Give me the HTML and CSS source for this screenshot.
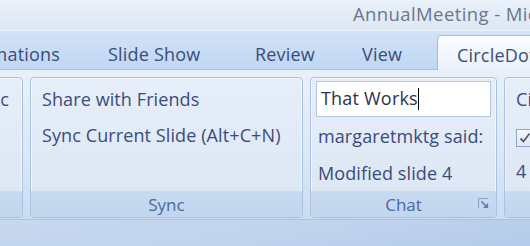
FILE: index.html
```html
<!DOCTYPE html>
<html lang="en">
<head>
    <meta charset="UTF-8">
    <title>AnnualMeeting - Microsoft PowerPoint</title>
    <link rel="stylesheet" href="styles.css">
</head>
<body>
    <div class="window">
        <div class="titlebar">
            <span class="title">AnnualMeeting - Microsoft PowerPoint</span>
        </div>

        <div class="tabs">
            <div class="tab tab-first">Animations</div>
            <div class="tab tab-slideshow">Slide Show</div>
            <div class="tab tab-review">Review</div>
            <div class="tab tab-view">View</div>
            <div class="tab tab-active">CircleDot</div>
        </div>

        <div class="ribbon">
            <div class="group group-prev">
                <div class="group-body">
                    <div class="cmd cmd-right">Doc</div>
                </div>
                <div class="group-label"></div>
            </div>

            <div class="group group-sync">
                <div class="group-body">
                    <div class="cmd">Share with Friends</div>
                    <div class="cmd">Sync Current Slide (Alt+C+N)</div>
                </div>
                <div class="group-label">Sync</div>
            </div>

            <div class="group group-chat">
                <div class="group-body">
                    <div class="chat-input">That Works<span class="caret"></span></div>
                    <div class="cmd chat-line">margaretmktg said:</div>
                    <div class="cmd chat-line">Modified slide 4</div>
                </div>
                <div class="group-label">
                    Chat
                    <svg class="launcher" viewBox="0 0 10 10">
                        <path d="M0.5 9V0.5H9" fill="none" stroke="#8fa6c4" stroke-width="1"/>
                        <path d="M3 3L8.5 8.5M5 8.5H8.5V5" fill="none" stroke="#5b7fb3" stroke-width="1.4"/>
                    </svg>
                </div>
            </div>

            <div class="group group-next">
                <div class="group-body">
                    <div class="cmd">Circles</div>
                    <div class="check-row">
                        <span class="checkbox">
                            <svg viewBox="0 0 14 14">
                                <path d="M2.5 7.5L5.5 10.5L11.5 2.5" fill="none" stroke="#4a5e80" stroke-width="1.8"/>
                            </svg>
                        </span>
                    </div>
                    <div class="cmd">4 - 5</div>
                </div>
                <div class="group-label"></div>
            </div>
        </div>

        <div class="statusband"></div>
    </div>
</body>
</html>
```

FILE: styles.css
```css
* {
    margin: 0;
    padding: 0;
    box-sizing: border-box;
}

body {
    font-family: 'Open Sans', 'Noto Sans', sans-serif;
    background: #c9daf0;
    overflow: hidden;
}

.window {
    width: 530px;
    height: 246px;
    overflow: hidden;
    display: flex;
    flex-direction: column;
}

/* Title bar */
.titlebar {
    height: 30px;
    flex-shrink: 0;
    background: linear-gradient(180deg, #e9f0f9 0%, #dde7f4 100%);
    padding-left: 353px;
    white-space: nowrap;
    overflow: hidden;
}

.title {
    display: block;
    font-size: 18.5px;
    line-height: 28px;
    letter-spacing: 0.4px;
    color: #6b7789;
}

/* Tabs */
.tabs {
    height: 40px;
    flex-shrink: 0;
    display: flex;
    align-items: flex-end;
    background: linear-gradient(180deg, #d3e3f7 0%, #bfd6f4 100%);
    border-top: 1px solid #eef4fb;
    border-bottom: 1px solid #a3bfe3;
    white-space: nowrap;
}

.tab {
    font-size: 18px;
    letter-spacing: 0.2px;
    color: #3a4c7c;
    height: 34px;
    line-height: 34px;
    padding-top: 2px;
    flex-shrink: 0;
}

.tab-first {
    margin-left: -37px;
    width: 145px;
}

.tab-slideshow {
    width: 147px;
}

.tab-review {
    width: 107px;
}

.tab-view {
    width: 75px;
}

.tab-active {
    padding-left: 19px;
    width: 120px;
    background: linear-gradient(180deg, #fbfdff 0%, #eaf1fb 100%);
    border: 1px solid #9ebde6;
    border-bottom: none;
    border-radius: 5px 5px 0 0;
    margin-bottom: -1px;
    height: 35px;
}

/* Ribbon body */
.ribbon {
    height: 150px;
    flex-shrink: 0;
    display: flex;
    gap: 7px;
    padding-top: 7px;
    background: linear-gradient(180deg, #e8f0fa 0%, #dbe7f6 60%, #cbdcf1 100%);
    border-bottom: 1px solid #a9c3e4;
}

.group {
    flex-shrink: 0;
    height: 141px;
    display: flex;
    flex-direction: column;
    border: 1px solid #aac2e2;
    border-radius: 4px;
    overflow: hidden;
    background: linear-gradient(180deg, #e6eef9 0%, #dbe6f4 100%);
    box-shadow: inset 0 0 0 1px rgba(255, 255, 255, 0.6);
}

.group-body {
    flex: 1;
    display: flex;
    flex-direction: column;
}

.group-label {
    height: 26px;
    flex-shrink: 0;
    position: relative;
    text-align: center;
    font-size: 17px;
    line-height: 28px;
    color: #4a6aa0;
    background: linear-gradient(180deg, #c9dbf1 0%, #c1d5ee 100%);
}

.cmd {
    font-size: 18px;
    letter-spacing: 0.1px;
    color: #3a4c7c;
    white-space: nowrap;
    height: 36px;
    line-height: 36px;
}

.group-prev {
    width: 83px;
    margin-left: -60px;
}

.group-prev .group-body {
    padding-top: 3px;
}

.cmd-right {
    text-align: right;
    padding-right: 13px;
}

.group-sync {
    width: 273px;
}

.group-sync .group-body {
    padding: 3px 0 0 11px;
}

.group-chat {
    width: 187px;
}

.group-chat .group-body {
    padding: 3px 5px 0;
}

.chat-input {
    height: 36px;
    background: #ffffff;
    border: 1px solid #b3c7e2;
    font-size: 18px;
    letter-spacing: 0.2px;
    line-height: 33px;
    padding-left: 4px;
    color: #2a3350;
    white-space: nowrap;
}

.caret {
    display: inline-block;
    width: 1px;
    height: 22px;
    background: #000000;
    vertical-align: -5px;
}

.chat-line {
    padding-left: 2px;
    height: 37px;
    line-height: 38px;
}

.launcher {
    position: absolute;
    right: 7px;
    top: 7px;
    width: 11px;
    height: 11px;
}

.group-next {
    width: 60px;
}

.group-next .group-body {
    padding: 3px 0 0 11px;
}

.check-row {
    height: 36px;
    display: flex;
    align-items: center;
    padding-top: 6px;
}

.checkbox {
    width: 18px;
    height: 18px;
    border: 1px solid #8ea7c8;
    background: linear-gradient(180deg, #f3f6fa 0%, #e2e8f0 100%);
    display: flex;
    align-items: center;
    justify-content: center;
}

.checkbox svg {
    width: 14px;
    height: 14px;
}

/* Area below the ribbon */
.statusband {
    flex: 1;
    background: linear-gradient(170deg, #c7d8ef 0%, #c0d4ee 50%, #b5cbea 100%);
}
```
